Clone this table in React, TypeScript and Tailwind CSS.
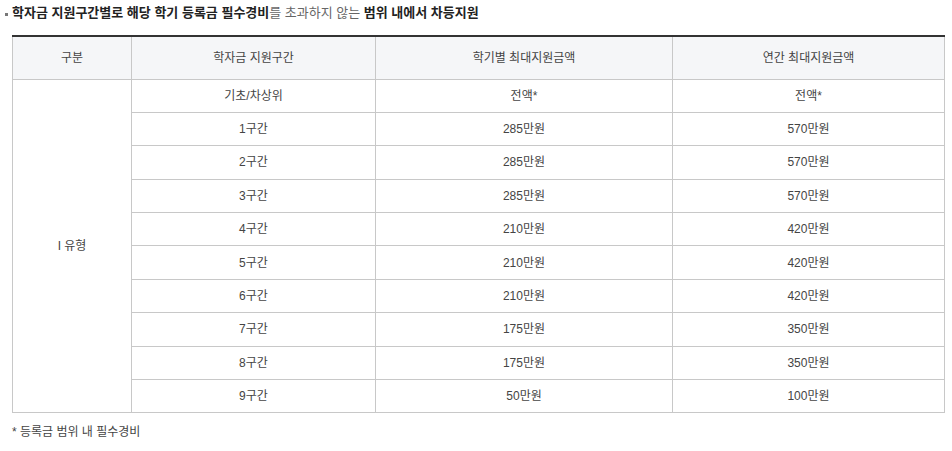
import React from 'react';

const rows: [string, string, string][] = [
  ['기초/차상위', '전액*', '전액*'],
  ['1구간', '285만원', '570만원'],
  ['2구간', '285만원', '570만원'],
  ['3구간', '285만원', '570만원'],
  ['4구간', '210만원', '420만원'],
  ['5구간', '210만원', '420만원'],
  ['6구간', '210만원', '420만원'],
  ['7구간', '175만원', '350만원'],
  ['8구간', '175만원', '350만원'],
  ['9구간', '50만원', '100만원'],
];

export default function App() {
  return (
    <div className="w-[952px] h-[451px] bg-white text-[#444] text-[12px] font-['Liberation_Sans','Noto_Sans_CJK_KR',sans-serif] pl-[12px] pr-[8px] pt-[4px]">
      {/* Title */}
      <div className="relative h-[18px] leading-[18px] text-[13px] whitespace-pre">
        <span className="absolute -left-[7px] top-[9px] w-[3px] h-[3px] bg-[#777]" />
        <span className="font-bold text-[#222]">학자금 지원구간별로 해당 학기 등록금 필수경비</span>
        <span className="text-[#666]">를 초과하지 않는 </span>
        <span className="font-bold text-[#222]">범위 내에서 차등지원</span>
      </div>

      {/* Table */}
      <table className="mt-[13px] w-[932px] border-collapse table-fixed border-t-2 border-t-[#333] text-center">
        <colgroup>
          <col className="w-[119px]" />
          <col className="w-[244px]" />
          <col className="w-[297px]" />
          <col className="w-[272px]" />
        </colgroup>
        <thead>
          <tr className="h-[43px] bg-[#f5f6f8]">
            <th className="font-normal border border-[#c8c8c8] border-t-[#333]">구분</th>
            <th className="font-normal border border-[#c8c8c8] border-t-[#333]">학자금 지원구간</th>
            <th className="font-normal border border-[#c8c8c8] border-t-[#333]">학기별 최대지원금액</th>
            <th className="font-normal border border-[#c8c8c8] border-t-[#333]">연간 최대지원금액</th>
          </tr>
        </thead>
        <tbody>
          {rows.map((r, i) => (
            <tr key={i} className="h-[33.4px]">
              {i === 0 && (
                <td rowSpan={10} className="border border-[#c8c8c8]">
                  I 유형
                </td>
              )}
              <td className="border border-[#c8c8c8]">{r[0]}</td>
              <td className="border border-[#c8c8c8]">{r[1]}</td>
              <td className="border border-[#c8c8c8]">{r[2]}</td>
            </tr>
          ))}
        </tbody>
      </table>

      <div className="mt-[10px] text-[12px] text-[#444]">* 등록금 범위 내 필수경비</div>
    </div>
  );
}
